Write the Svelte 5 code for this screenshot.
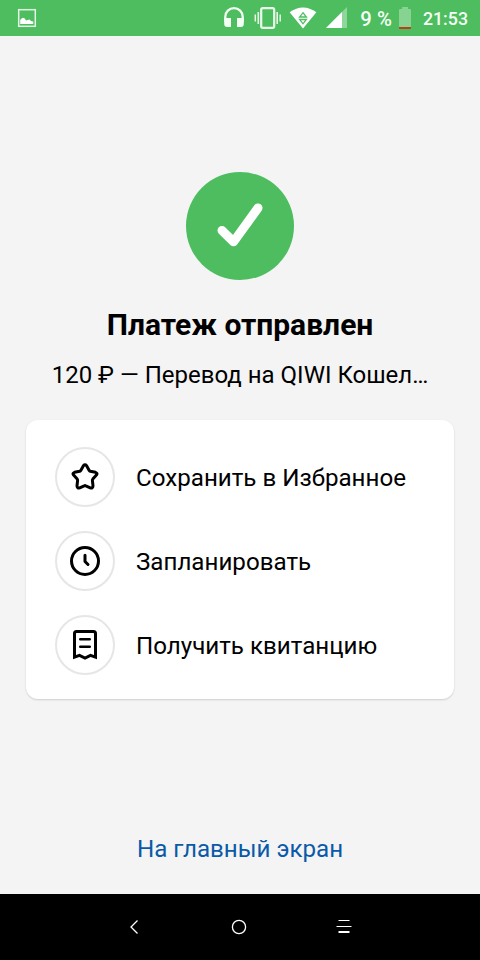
<script lang="ts">
    type Action = {
        icon: 'star' | 'clock' | 'receipt',
        label: string
    }

    const actions: Action[] = [
        { icon: 'star', label: 'Сохранить в Избранное' },
        { icon: 'clock', label: 'Запланировать' },
        { icon: 'receipt', label: 'Получить квитанцию' }
    ]

    let { amount = '120 ₽', target = 'Перевод на QIWI Кошел…' } = $props()
</script>

<div class="screen">
    <header class="status-bar">
        <svg class="picture" width="20" height="20" viewBox="0 0 20 20">
            <rect x="1.7" y="1.7" width="16.6" height="16.6" fill="none" stroke="#e4f7e6" stroke-width="1.5" />
            <path d="M3.2 16V12L4.6 10.4 6 9.8 7.8 10.6 9 12.6 12.5 11.6 14 13 16.3 13.6V16Z" fill="#fff" />
        </svg>
        <svg class="headphones" width="22" height="22" viewBox="0 0 22 22">
            <path d="M2.3 16V10.8a8.7 8.7 0 0 1 17.4 0V16" fill="none" stroke="#f2fff3" stroke-width="2.3" />
            <path d="M1.2 12H8v9H4.2a3 3 0 0 1-3-3ZM14 12h6.8v6a3 3 0 0 1-3 3H14Z" fill="#f2fff3" />
        </svg>
        <svg class="vibrate" width="28" height="24" viewBox="0 0 28 24" fill="none" stroke="#e9faea">
            <rect x="7.2" y="2.2" width="13" height="19.6" rx="1.5" stroke-width="2.2" />
            <path d="M4.3 6v12M23.2 6v12" stroke-width="1.6" />
            <path d="M1.3 8.5v7M26.2 8.5v7" stroke-width="1.5" />
        </svg>
        <svg class="wifi" width="28" height="22" viewBox="0 0 28 22">
            <path d="M.6 5.2Q14-4.2 27.4 5.2L14 21.5Z" fill="#fff" />
            <path d="M14 5.7l3.4 4.3h-6.8ZM10.6 12.5h6.8L14 16.8Z" fill="#fff" stroke="#4fbd61" stroke-width="1.3" />
        </svg>
        <svg class="signal" width="22" height="22" viewBox="0 0 22 22">
            <path d="M0 21L21 0V21Z" fill="#8ed699" />
            <path d="M0 21L16 5V21Z" fill="#fff" />
        </svg>
        <span class="charge">9 %</span>
        <svg class="battery" width="12" height="22" viewBox="0 0 12 22">
            <path d="M3 2V0h6v2h2a1 1 0 0 1 1 1v17H0V3a1 1 0 0 1 1-1Z" fill="#87d391" />
            <path d="M0 20h12v1a1 1 0 0 1-1 1H1a1 1 0 0 1-1-1Z" fill="#c33a1b" />
        </svg>
        <time>21:53</time>
    </header>

    <main>
        <div class="success">
            <svg width="108" height="108" viewBox="0 0 108 108">
                <path d="M36 58.5L47.5 69.8L72 36" />
            </svg>
        </div>
        <h1>Платеж отправлен</h1>
        <p class="summary">{amount} — {target}</p>

        <div class="card">
            {#each actions as action}
                <button class="action">
                    <span class="action-icon">
                        <svg width="30" height="30" viewBox="0 0 30 30">
                            {#if action.icon === 'star'}
                                <path d="M13.4 3.8Q15 1.9 16.6 3.8L19.2 8.4Q19.6 9 20.3 9.2L25.5 10.3Q28 11.2 26.4 13.1L22.8 17.1Q22.3 17.7 22.4 18.5L23 23.9Q22.8 26.7 20.3 25.8L15.8 23.8Q15 23.4 14.2 23.8L9.7 25.8Q7.2 26.7 7 23.9L7.6 18.5Q7.7 17.7 7.2 17.1L3.6 13.1Q2 11.2 4.5 10.3L9.7 9.2Q10.4 9 10.8 8.4Z" />
                            {:else if action.icon === 'clock'}
                                <circle cx="15" cy="15" r="13.5" />
                                <path d="M15 9.2V15.5L18 18.5" />
                            {:else}
                                <path class="sheet" d="M4.5 27.2V3.5a2 2 0 0 1 2-2H23.5a2 2 0 0 1 2 2V27.2L20.5 25.4 15 28 9.5 25.4Z" />
                                <path class="lines" d="M10.3 9.2H19.7M10.3 16.8H19.7" />
                            {/if}
                        </svg>
                    </span>
                    <span class="label">{action.label}</span>
                </button>
            {/each}
        </div>

        <button class="home-link">На главный экран</button>
    </main>

    <nav>
        <svg width="16" height="16" viewBox="0 0 16 16">
            <path d="M11.5 1.5L5 8L11.5 14.5" />
        </svg>
        <svg width="16" height="16" viewBox="0 0 16 16">
            <circle cx="8" cy="8" r="6.6" />
        </svg>
        <svg width="16" height="16" viewBox="0 0 16 16">
            <path d="M2.5 1.5H13.5M.5 7.5H15.5" stroke-width="1" />
            <path d="M2.5 13H13.5" stroke-width="2" />
        </svg>
    </nav>
</div>

<style>
    :global(body) { margin: 0; }

    .screen {
        display: flex;
        flex-direction: column;
        width: 480px;
        height: 960px;
        background: #f4f4f4;
        color: #000;
        font-family: Roboto, "Noto Sans", sans-serif;
    }

    svg { display: block; flex: none; }

    .status-bar {
        display: flex;
        align-items: center;
        box-sizing: border-box;
        height: 36px;
        padding: 0 12px 0 17px;
        background: #4dbd5f;
        color: #f4fff5;
        font-size: 17.8px;
        font-weight: 550;
    }

    .headphones { margin: 0 9px 3px auto; }
    .vibrate { margin-right: 7px; }
    .wifi { margin-right: 9px; }
    .signal { margin: 0 12px 0 0; }
    .charge { padding-top: 2px; font-size: 20.3px; }
    .battery { margin: 0 12px 0 7px; }
    time { line-height: 36px; padding-top: 2px; }

    main {
        display: flex;
        flex-direction: column;
        align-items: center;
        flex: 1;
        padding: 136px 26px 0;
    }

    .success {
        width: 108px;
        height: 108px;
        border-radius: 50%;
        background: #4dbd5f;
    }

    .success path {
        fill: none;
        stroke: #fff;
        stroke-width: 9;
        stroke-linecap: round;
        stroke-linejoin: round;
    }

    h1 {
        margin: 27px 0 0;
        font-size: 30px;
        font-weight: 700;
        line-height: 36px;
        white-space: nowrap;
    }

    .summary {
        margin: 18px 0 30px;
        font-size: 24px;
        line-height: 29px;
        white-space: nowrap;
    }

    .card {
        display: flex;
        flex-direction: column;
        gap: 24px;
        box-sizing: border-box;
        width: 428px;
        height: 279px;
        padding: 27px 29px;
        border-radius: 12px;
        background: #fff;
        box-shadow: 0 1px 2px rgb(0 0 0 / 0.16);
    }

    button {
        padding: 0;
        border: 0;
        background: none;
        color: inherit;
        font: inherit;
        font-size: 24.15px;
        white-space: nowrap;
    }

    .action {
        display: flex;
        align-items: center;
        gap: 21px;
    }

    .label { padding-top: 2px; }

    .action-icon {
        display: flex;
        align-items: center;
        justify-content: center;
        box-sizing: border-box;
        width: 60px;
        height: 60px;
        border: 2px solid #e6e6e6;
        border-radius: 50%;
    }

    .action-icon svg {
        fill: none;
        stroke: #000;
        stroke-width: 3;
        stroke-linecap: round;
        stroke-linejoin: round;
    }

    .action-icon .sheet { stroke-linejoin: miter; }
    .action-icon .lines { stroke-width: 2.6; }

    .home-link {
        margin-top: 132px;
        color: #0a5aa8;
        line-height: 36px;
    }

    nav {
        display: flex;
        align-items: center;
        justify-content: center;
        gap: 89px;
        height: 66px;
        padding-right: 2px;
        background: #000;
    }

    nav svg {
        fill: none;
        stroke: #fff;
        stroke-width: 1.3;
    }
</style>
